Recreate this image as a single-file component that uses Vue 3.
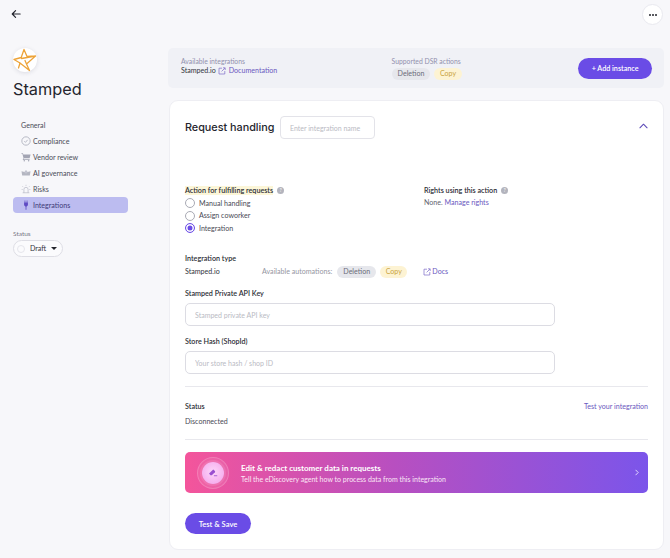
<script setup>
const navItems = [
  { label: 'General', icon: '' },
  { label: 'Compliance', icon: 'check' },
  { label: 'Vendor review', icon: 'cart' },
  { label: 'AI governance', icon: 'crown' },
  { label: 'Risks', icon: 'risk' },
  { label: 'Integrations', icon: 'plug', active: true }
]
const actions = [
  { label: 'Manual handling' },
  { label: 'Assign coworker' },
  { label: 'Integration', checked: true }
]
</script>

<template>
  <div class="page">
    <header class="topbar">
      <svg class="back" width="10" height="10" viewBox="0 0 12 12" fill="none" stroke="#23242c" stroke-width="1.4" stroke-linecap="round" stroke-linejoin="round">
        <path d="M11 6H1.5M5.5 2 1.5 6l4 4" />
      </svg>
      <button class="more"><span></span><span></span><span></span></button>
    </header>

    <div class="layout">
      <aside class="sidebar">
        <div class="logo">
          <svg width="24" height="24" viewBox="0 0 24 24" fill="none" stroke="#eda338" stroke-width="1.3" stroke-linejoin="round" stroke-linecap="round">
            <path d="M11 1.5 8.2 9.5 1 11.5l6 3.5L5.5 20M11 1.5l3 7 8.5-.5-9 8-1.5-3.5M8.5 10.5l14-2.5M13.5 16l3 6.5L7 15" />
          </svg>
        </div>
        <h1 class="brand">Stamped</h1>
        <nav class="nav">
          <div v-for="item in navItems" :key="item.label" class="nav-item" :class="{ active: item.active, plain: !item.icon }">
            <svg v-if="item.icon === 'check'" viewBox="0 0 11 11" fill="none" stroke="#a3a5b3" stroke-width=".8"><circle cx="5.5" cy="5.5" r="4.6" /><path d="m3.6 5.7 1.3 1.3 2.4-2.8" /></svg>
            <svg v-if="item.icon === 'cart'" viewBox="0 0 11 11" fill="#a3a5b3"><path d="M.5 1.5h1.7l.3 1.2H10.5L9.5 6.8H3.5L2.9 8h6.6v.8H1.8l1-2-1.2-4.5H.5z" /><circle cx="3.6" cy="9.7" r=".8" /><circle cx="8.4" cy="9.7" r=".8" /></svg>
            <svg v-if="item.icon === 'crown'" viewBox="0 0 12 11" fill="#a3a5b3"><path d="M6 2 7.8 4.2 11.4 3.5 10.6 8.4H1.4L.6 3.5 4.2 4.2z" opacity=".8" /><circle cx="6" cy="4.6" r="1.6" fill="#c3c4d0" /></svg>
            <svg v-if="item.icon === 'risk'" viewBox="0 0 12 12" fill="none" stroke="#b3b5c2" stroke-width=".8"><path d="M3.5 10.5V6.5a2.5 2.5 0 0 1 5 0v4M2 10.5h8M6 1v1.2M1.8 2.8l.9.9M10.2 2.8l-.9.9M.8 6.6H2M10 6.6h1.2" /></svg>
            <svg v-if="item.icon === 'plug'" viewBox="0 0 11 12" fill="#5f4bc4"><path d="M3.8.6h.9v2.5h1.6V.6h.9v2.5h.6v3.2L6 8v3.6H5V8L3.2 6.3V3.1h.6z" /></svg>
            <span>{{ item.label }}</span>
          </div>
        </nav>
        <div class="status-label">Status</div>
        <div class="status-pill">
          <span class="status-dot"></span>
          <span>Draft</span>
          <span class="caret"></span>
        </div>
      </aside>

      <main class="content">
        <section class="infobar">
          <div class="info-col">
            <div class="info-title">Available integrations</div>
            <div class="info-line">
              <span class="dark">Stamped.io</span>
              <svg class="ext" width="8" height="8" viewBox="0 0 8 8" fill="none" stroke="#7c6bc9" stroke-width=".7"><path d="M4 1.2H1v5.8h5.8V4M3.6 4.4 7 1M5 .8h2.2V3" /></svg>
              <a class="link">Documentation</a>
            </div>
          </div>
          <div class="info-col dsr">
            <div class="info-title">Supported DSR actions</div>
            <div class="tags">
              <span class="tag grey">Deletion</span>
              <span class="tag yellow">Copy</span>
            </div>
          </div>
          <button class="btn add">+ Add instance</button>
        </section>

        <section class="card">
          <div class="card-head">
            <h2>Request handling</h2>
            <input class="name-input" placeholder="Enter integration name" />
            <svg class="chevron" width="9" height="6" viewBox="0 0 10 6" fill="none" stroke="#5d4bb8" stroke-width="1.2" stroke-linecap="round" stroke-linejoin="round"><path d="M1 5 5 1l4 4" /></svg>
          </div>

          <div class="action-row">
            <div class="action-left">
              <div class="label-line spaced">
                <span class="label highlight">Action for fulfilling requests</span>
                <span class="help">?</span>
              </div>
              <label v-for="a in actions" :key="a.label" class="radio-row">
                <span class="radio" :class="{ on: a.checked }"></span>
                {{ a.label }}
              </label>
            </div>
            <div class="action-right">
              <div class="label-line">
                <span class="label">Rights using this action</span>
                <span class="help">?</span>
              </div>
              <div class="rights">None. <a class="link">Manage rights</a></div>
            </div>
          </div>

          <div class="type-block">
            <div class="label">Integration type</div>
            <div class="type-row">
              <span class="type-name">Stamped.io</span>
              <span class="muted">Available automations:</span>
              <span class="tag grey">Deletion</span>
              <span class="tag yellow">Copy</span>
              <svg class="ext docs-ext" width="8" height="8" viewBox="0 0 8 8" fill="none" stroke="#7c6bc9" stroke-width=".7"><path d="M4 1.2H1v5.8h5.8V4M3.6 4.4 7 1M5 .8h2.2V3" /></svg>
              <a class="link">Docs</a>
            </div>
          </div>

          <label class="label field-label first">Stamped Private API Key</label>
          <input class="field" placeholder="Stamped private API key" />
          <label class="label field-label">Store Hash (ShopId)</label>
          <input class="field" placeholder="Your store hash / shop ID" />

          <hr class="rule first-rule" />

          <div class="status-row">
            <span class="label">Status</span>
            <a class="link">Test your integration</a>
          </div>
          <div class="disconnected">Disconnected</div>

          <hr class="rule second-rule" />

          <div class="banner">
            <div class="halo">
              <div class="halo-inner">
                <svg width="12" height="12" viewBox="0 0 14 14" fill="none">
                  <path d="M2.4 7.6 6.6 3.4a1 1 0 0 1 1.4 0l1.2 1.2a1 1 0 0 1 0 1.4L5.6 9.6H4z" fill="#9a4fd0" />
                  <path d="M8.5 10.2h3" stroke="#9a4fd0" stroke-width="1" stroke-linecap="round" />
                </svg>
              </div>
            </div>
            <div class="banner-text">
              <div class="banner-title">Edit &amp; redact customer data in requests</div>
              <div class="banner-sub">Tell the eDiscovery agent how to process data from this integration</div>
            </div>
            <svg class="banner-arrow" width="4" height="7" viewBox="0 0 5 8" fill="none" stroke="#f0e8ff" stroke-width="1.1" stroke-linecap="round" stroke-linejoin="round"><path d="m1 1 3 3-3 3" /></svg>
          </div>

          <button class="btn save">Test &amp; Save</button>
        </section>
      </main>
    </div>
  </div>
</template>

<style>
html, body {
  margin: 0;
  background: #f7f7fa;
}
</style>

<style scoped>
.page {
  width: 670px;
  height: 558px;
  overflow: hidden;
  background: #f7f7fa;
  font-family: Lato, "Liberation Sans", sans-serif;
  font-size: 7.1px;
  color: #33343d;
  box-sizing: border-box;
}
.topbar {
  height: 48px;
  display: flex;
  justify-content: space-between;
  align-items: flex-start;
  padding: 4px 7px 0 11px;
  box-sizing: border-box;
}
.back {
  margin-top: 5px;
}
.more {
  width: 21px;
  height: 21px;
  border: 1px solid #e9e9ef;
  border-radius: 50%;
  background: #fff;
  display: flex;
  align-items: center;
  justify-content: center;
  gap: 1px;
  padding: 0;
}
.more span {
  width: 2px;
  height: 2px;
  border-radius: 50%;
  background: #23242c;
}
.layout {
  display: flex;
  padding-left: 13px;
}
.sidebar {
  width: 115px;
  margin-right: 41px;
}
.logo {
  width: 24px;
  height: 24px;
  border-radius: 50%;
  background: #fff;
  box-shadow: 0 1px 4px rgba(60, 60, 90, 0.15);
}
.brand {
  font-family: Inter, "Open Sans", sans-serif;
  font-weight: 400;
  font-size: 16.3px;
  line-height: 22px;
  margin: 6px 0 0;
  color: #24252d;
}
.nav {
  margin-top: 17px;
}
.nav-item {
  height: 16px;
  display: flex;
  align-items: center;
  gap: 2px;
  padding-left: 8px;
  border-radius: 4px;
  color: #4b4c58;
}
.nav-item svg {
  width: 10px;
  height: 10px;
  flex: none;
}
.nav-item.active {
  background: #bcbcf0;
  color: #3e3a78;
}
.status-label {
  margin-top: 16px;
  font-size: 6.5px;
  line-height: 10px;
  color: #777885;
}
.status-pill {
  margin-top: 1px;
  width: 50px;
  height: 17px;
  box-sizing: border-box;
  border: 1px solid #dedee5;
  border-radius: 9px;
  background: #fbfbfd;
  display: flex;
  align-items: center;
  padding-left: 3px;
  gap: 5px;
  color: #33343d;
}
.status-dot {
  width: 8px;
  height: 8px;
  border-radius: 50%;
  border: 1px solid #e6e6ec;
  box-sizing: border-box;
}
.caret {
  width: 0;
  height: 0;
  margin-left: 0;
  border-left: 3px solid transparent;
  border-right: 3px solid transparent;
  border-top: 3.5px solid #23242c;
}
.content {
  width: 495px;
  flex: none;
}
.infobar {
  height: 40px;
  border-radius: 5px;
  background: #f0f1f6;
  display: flex;
  align-items: flex-start;
  padding: 8px 12px 0 13px;
  box-sizing: border-box;
  margin-left: -1px;
}
.info-col {
  width: 211px;
}
.dsr {
  width: 187px;
}
.info-title {
  font-size: 6.8px;
  line-height: 10px;
  color: #9190ad;
}
.info-line {
  line-height: 10px;
  display: flex;
  align-items: center;
  gap: 2.5px;
}
.dark {
  color: #33343d;
}
.link {
  color: #6a58c0;
}
.tags {
  margin-top: 2px;
  display: flex;
  gap: 4px;
}
.tag {
  height: 12px;
  line-height: 12px;
  padding: 0 6px;
  border-radius: 6px;
}
.tag.grey {
  background: #e6e7ec;
  color: #6b6c78;
}
.tag.yellow {
  background: #fdf3d3;
  color: #c9a33f;
  padding: 0 5.5px;
}
.btn {
  border: 0;
  background: #6a4ce6;
  color: #fff;
  font-family: Lato, "Liberation Sans", sans-serif;
  font-weight: 600;
  border-radius: 11px;
  padding: 0;
}
.add {
  width: 74px;
  height: 21px;
  margin-top: 2px;
  font-size: 7.2px;
}
.card {
  margin-top: 12px;
  height: 450px;
  background: #fff;
  border-radius: 9px;
  border: 1px solid #eeeef3;
  box-sizing: border-box;
  padding: 15px 15px 0;
}
.card-head {
  display: flex;
  align-items: center;
  height: 23px;
}
.card-head h2 {
  font-family: Inter, "Open Sans", sans-serif;
  font-weight: 500;
  font-size: 10.8px;
  margin: 0 0 1px;
  width: 95px;
  color: #24252d;
}
.name-input {
  width: 95px;
  height: 23px;
  box-sizing: border-box;
  border: 1px solid #e3e3e9;
  border-radius: 4px;
  padding: 0 9px;
  font-family: Lato, "Liberation Sans", sans-serif;
  font-size: 7px;
  outline: none;
}
input::placeholder {
  color: #b9bac3;
}
.chevron {
  margin-left: auto;
  transform: translate(0, -2px);
}
.action-row {
  display: flex;
  margin-top: 46px;
  height: 66px;
}
.action-left {
  width: 239px;
}
.label-line {
  display: flex;
  align-items: center;
  gap: 4px;
  height: 11px;
}
.spaced {
  margin-bottom: 1px;
}
.label {
  font-size: 7.2px;
  font-weight: 600;
  color: #2d2e36;
}
.highlight {
  background: #fcf6d8;
}
.help {
  width: 7px;
  height: 7px;
  border-radius: 50%;
  background: #b3b4bd;
  color: #fff;
  font-size: 5px;
  line-height: 7px;
  text-align: center;
}
.radio-row {
  display: flex;
  align-items: center;
  gap: 4px;
  height: 12.6px;
  color: #494a55;
}
.radio {
  width: 10px;
  height: 10px;
  box-sizing: border-box;
  border: 1px solid #a9aab4;
  border-radius: 50%;
  background: #fff;
}
.radio.on {
  border-color: #6a4ce6;
  box-shadow: inset 0 0 0 1.5px #fff, inset 0 0 0 5px #6a4ce6;
}
.rights {
  margin-top: 1px;
  line-height: 11px;
  color: #62636f;
}
.type-block {
  margin-top: 2px;
}
.type-block > .label {
  display: block;
  line-height: 12px;
}
.type-row {
  display: flex;
  align-items: center;
  height: 13px;
}
.type-name {
  width: 77px;
  color: #33343d;
}
.muted {
  color: #95969f;
  margin-right: 5px;
}
.type-row .tag {
  margin-right: 4px;
}
.docs-ext {
  margin-left: 12px;
  margin-right: 1px;
}
.field-label {
  display: block;
  line-height: 11px;
}
.first {
  margin-top: 10px;
}
.field {
  display: block;
  width: 370px;
  height: 23px;
  box-sizing: border-box;
  border: 1px solid #dcdce3;
  border-radius: 5px;
  padding: 0 9px;
  margin-top: 4px;
  margin-bottom: 10px;
  font-family: Lato, "Liberation Sans", sans-serif;
  font-size: 7px;
  outline: none;
}
.rule {
  border: 0;
  border-top: 1px solid #e8e8ed;
  margin: 0;
  width: 463px;
}
.first-rule {
  margin-top: 12px;
}
.status-row {
  margin-top: 14px;
  display: flex;
  justify-content: space-between;
  width: 463px;
  line-height: 11px;
}
.disconnected {
  margin-top: 4px;
  line-height: 11px;
  color: #494a55;
}
.second-rule {
  margin-top: 12px;
}
.banner {
  margin-top: 12px;
  width: 463px;
  height: 41px;
  border-radius: 5px;
  background: linear-gradient(90deg, #f4559b 0%, #b84fc0 45%, #7b55ea 100%);
  display: flex;
  align-items: center;
  box-sizing: border-box;
  padding: 0 9px 0 12px;
  color: #fff;
}
.halo {
  width: 32px;
  height: 32px;
  border-radius: 50%;
  border: 1px solid rgba(255, 255, 255, 0.18);
  background: rgba(255, 255, 255, 0.08);
  box-sizing: border-box;
  display: flex;
  align-items: center;
  justify-content: center;
  flex: none;
}
.halo-inner {
  width: 22px;
  height: 22px;
  border-radius: 50%;
  background: radial-gradient(circle at 50% 45%, #fdd6fa, #f3a0ea);
  box-shadow: 0 0 0 2px rgba(255, 255, 255, 0.1);
  display: flex;
  align-items: center;
  justify-content: center;
}
.banner-text {
  margin-left: 12px;
  flex: 1;
}
.banner-title {
  font-size: 8px;
  font-weight: 700;
  line-height: 13px;
}
.banner-sub {
  font-size: 7px;
  line-height: 9px;
  color: #fbe6f6;
}
.save {
  display: block;
  margin-top: 20px;
  width: 66px;
  height: 21px;
  font-size: 7.6px;
}
</style>
